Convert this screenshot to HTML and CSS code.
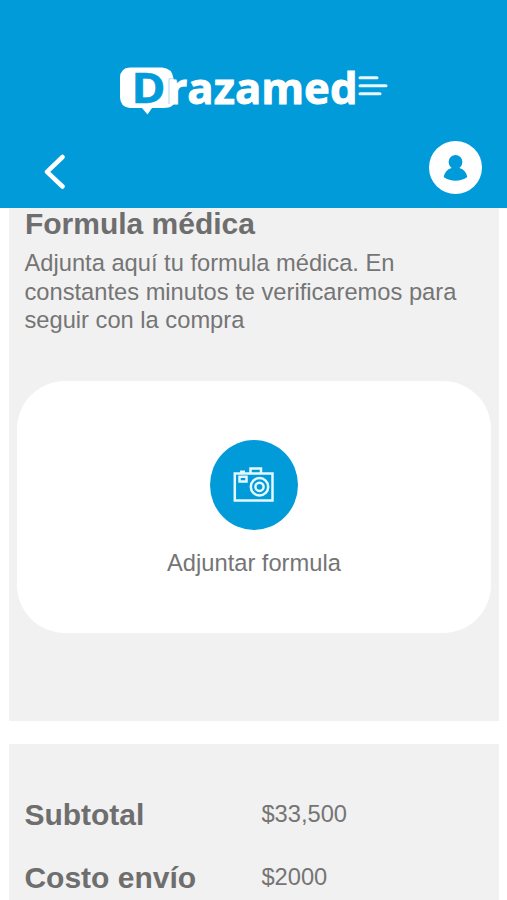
FILE: index.html
```html
<!DOCTYPE html>
<html lang="es">
<head>
<meta charset="utf-8">
<title>Drazamed</title>
<link rel="stylesheet" href="styles.css">
</head>
<body>
<header class="header">
  <svg class="logo" width="272" height="54" viewBox="118 64 272 54" role="img" aria-label="Drazamed">
    <path d="M130 67.500H162Q172 68 173.500 78.500V104.500Q171 108 163 108H152L147.500 114.500L142 108H130Q120 107 120 97V78Q120 68 130 67.500Z" fill="#fff"/>
    <path d="M169 104V78.800H174" fill="none" stroke="#9bd5ef" stroke-width="0.900"/>
    <text class="logo-initial" x="131.500" y="102.500" textLength="34" lengthAdjust="spacingAndGlyphs">D</text>
    <text class="logo-name" x="167.500" y="103.500" textLength="190" lengthAdjust="spacingAndGlyphs">razamed</text>
    <path d="M360 77.700H377M360 85.700H386M360 93.700H380" stroke="#e8f8ff" stroke-width="3" stroke-linecap="round"/>
  </svg>
  <nav class="toolbar">
    <button class="back" aria-label="Volver">
      <svg width="24" height="36" viewBox="0 0 24 36"><path d="M19.500 3L4 17.800L19.500 32.500" fill="none" stroke="#fff" stroke-width="4.500" stroke-linecap="round" stroke-linejoin="round"/></svg>
    </button>
    <button class="profile" aria-label="Perfil">
      <svg width="53" height="53" viewBox="0 0 53 53"><circle cx="26.500" cy="21" r="6.900" fill="#029bda"/><path d="M22.500 24H30.500V27Q37 29 38.300 36Q33 39.800 26.500 39.800Q20 39.800 14.700 36Q16 29 22.500 27Z" fill="#029bda"/></svg>
    </button>
  </nav>
</header>
<main class="content">
  <section class="panel formula">
    <h1 class="title">Formula médica</h1>
    <p class="description">Adjunta aquí tu formula médica. En constantes minutos te verificaremos para seguir con la compra</p>
    <button class="upload">
      <span class="camera">
        <svg width="42" height="38" viewBox="0 0 42 38" fill="none" stroke="#e3f8ff" stroke-width="2.500">
          <path d="M1.800 7.500H39.500V34.500H1.800ZM17.500 7.500V2.500H28V7.500M7 5.800H12M6.500 10.800H13.500V15.500H6.500Z"/>
          <circle cx="26.500" cy="20.800" r="8.700"/><circle cx="26.500" cy="20.800" r="4.100"/>
        </svg>
      </span>
      <span>Adjuntar formula</span>
    </button>
  </section>
  <section class="panel totals">
    <dl class="row"><dt>Subtotal</dt><dd>$33,500</dd></dl>
    <dl class="row"><dt>Costo envío</dt><dd>$2000</dd></dl>
  </section>
</main>
</body>
</html>
```
FILE: styles.css
```css
* { box-sizing: border-box; }
html, body { height: 100%; }
body {
  display: flex;
  flex-direction: column;
  margin: 0;
  overflow: hidden;
  background: #fff;
  color: #757575;
  font: 23.7px/28.5px "Liberation Sans", Arial, sans-serif;
}
button { border: 0; padding: 0; background: none; font: inherit; color: inherit; }
svg { display: block; }
.header {
  flex: none;
  height: 208px;
  padding-top: 64px;
  background: #029bda;
}
.logo { margin-left: 118px; overflow: visible; }
.logo-initial, .logo-name { font-family: "Open Sans", sans-serif; font-weight: 700; }
.logo-initial { font-size: 42px; fill: #029bda; stroke: #029bda; stroke-width: 0.6; }
.logo-name { font-size: 43.5px; fill: #fff; stroke: #fff; stroke-width: 0.9; }
.toolbar {
  display: flex;
  justify-content: space-between;
  align-items: center;
  margin-top: 23px;
  padding: 0 25px 0 43px;
}
.back { margin-top: 9px; }
.profile { width: 53px; height: 53px; border-radius: 50%; background: #fff; }
.content {
  display: flex;
  flex: 1;
  flex-direction: column;
  gap: 23.500px;
  min-height: 0;
  padding: 0 8.500px 0 9.400px;
}
.panel { background: #f1f1f1; }
.formula { flex: none; height: 512.500px; padding: 0 7.500px; }
.title {
  margin: 0;
  padding: 0 8px;
  font-size: 30px;
  line-height: 32px;
  color: #6e6e6e;
}
.description { margin: 9px 0 0; padding: 0 7.600px; }
.upload {
  display: flex;
  flex-direction: column;
  align-items: center;
  gap: 19px;
  width: 100%;
  height: 252px;
  margin-top: 46.500px;
  padding-top: 59px;
  border-radius: 48px;
  background: #fff;
}
.camera {
  display: grid;
  place-items: center;
  width: 88px;
  height: 90px;
  border-radius: 50%;
  background: #029bda;
}
.totals { flex: 1; min-height: 0; padding: 54px 15px 0; }
.row {
  display: grid;
  grid-template-columns: 237px 1fr;
  height: 63px;
  margin: 0;
}
.row dt { font-size: 30px; line-height: 34px; font-weight: 700; color: #6e6e6e; }
.row dd { margin: 0; line-height: 32px; }
.row:last-child { height: 36px; }
```
